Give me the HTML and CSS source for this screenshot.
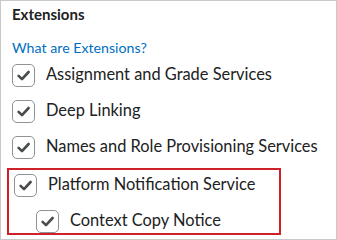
FILE: index.html
```html
<!DOCTYPE html>
<html lang="en">
<head>
<meta charset="utf-8">
<title>Extensions</title>
<link rel="stylesheet" href="styles.css">
</head>
<body>
<div class="panel">
  <h2 class="heading">Extensions</h2>
  <a class="link" href="#">What are Extensions?</a>
  <div class="row">
    <span class="box"><svg viewBox="0 0 23 23" width="23" height="23"><path d="M6.6 11.8 L10 15.2 L16.6 8" fill="none" stroke="#494c4e" stroke-width="2.6" stroke-linecap="round" stroke-linejoin="round"/></svg></span>
    <span class="label">Assignment and Grade Services</span>
  </div>
  <div class="row">
    <span class="box"><svg viewBox="0 0 23 23" width="23" height="23"><path d="M6.6 11.8 L10 15.2 L16.6 8" fill="none" stroke="#494c4e" stroke-width="2.6" stroke-linecap="round" stroke-linejoin="round"/></svg></span>
    <span class="label">Deep Linking</span>
  </div>
  <div class="row">
    <span class="box"><svg viewBox="0 0 23 23" width="23" height="23"><path d="M6.6 11.8 L10 15.2 L16.6 8" fill="none" stroke="#494c4e" stroke-width="2.6" stroke-linecap="round" stroke-linejoin="round"/></svg></span>
    <span class="label">Names and Role Provisioning Services</span>
  </div>
  <div class="highlight">
    <div class="row row-first">
      <span class="box"><svg viewBox="0 0 23 23" width="23" height="23"><path d="M6.6 11.8 L10 15.2 L16.6 8" fill="none" stroke="#494c4e" stroke-width="2.6" stroke-linecap="round" stroke-linejoin="round"/></svg></span>
      <span class="label">Platform Notification Service</span>
    </div>
    <div class="row row-child">
      <span class="box"><svg viewBox="0 0 23 23" width="23" height="23"><path d="M6.6 11.8 L10 15.2 L16.6 8" fill="none" stroke="#494c4e" stroke-width="2.6" stroke-linecap="round" stroke-linejoin="round"/></svg></span>
      <span class="label">Context Copy Notice</span>
    </div>
  </div>
</div>
</body>
</html>
```
FILE: styles.css
```css
html, body {
  margin: 0;
  padding: 0;
  background: #ffffff;
}
.panel {
  width: 337px;
  height: 240px;
  box-sizing: border-box;
  border: 1px solid #c9c9c9;
  padding: 3px 0 0 11px;
  font-family: Lato, "Liberation Sans", sans-serif;
  color: #202122;
  overflow: hidden;
}
.heading {
  margin: 0;
  font-size: 15px;
  font-weight: 700;
  line-height: 20px;
}
.link {
  display: block;
  margin-top: 14px;
  font-size: 14.2px;
  line-height: 20px;
  color: #006fbf;
  text-decoration: none;
}
.row {
  display: flex;
  align-items: flex-start;
  gap: 11px;
  margin-top: 13px;
}
.link + .row {
  margin-top: 6px;
}
.box {
  flex: none;
  width: 23px;
  height: 23px;
  box-sizing: border-box;
  border: 1px solid #8d9396;
  border-radius: 5px;
  background: #ffffff;
  position: relative;
}
.box svg {
  position: absolute;
  left: -1px;
  top: -1px;
  display: block;
}
.label {
  font-size: 16.4px;
  line-height: 20px;
  white-space: nowrap;
}
.highlight {
  width: 274px;
  box-sizing: border-box;
  margin: 9px 0 0 -5px;
  border: 2px solid #d0202a;
  padding: 4px 0 0 5px;
  height: 67px;
}
.highlight .row-first {
  margin-top: 0;
}
.highlight .row-child {
  margin-top: 13px;
  padding-left: 22px;
}
```
